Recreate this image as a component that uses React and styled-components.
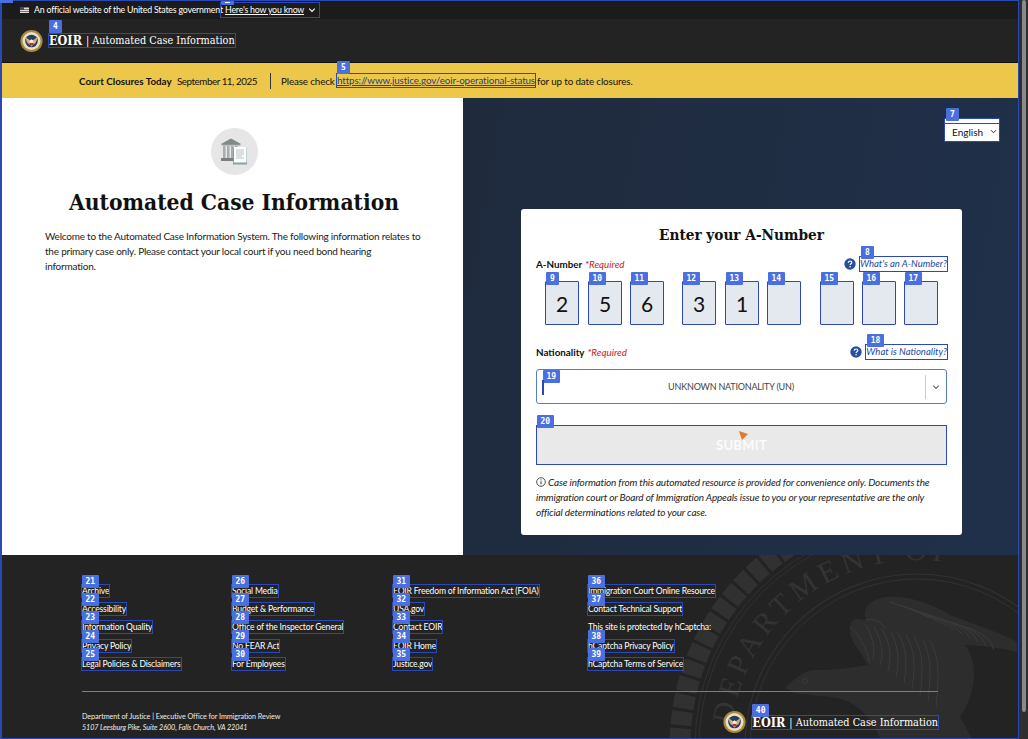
import React from "react";
import styled, { createGlobalStyle } from "styled-components";

const sans = `"Lato", "Noto Sans", sans-serif`;
const serif = `"DejaVu Serif", "Liberation Serif", serif`;

const Global = createGlobalStyle`
  html, body { margin: 0; padding: 0; height: 739px; overflow: hidden; background: #232323; }
  * { box-sizing: border-box; }
  body { font-family: ${sans}; }
`;

const Viewport = styled.div`
  position: relative; display: flex; width: 1028px; height: 739px; overflow: hidden;
`;
const Page = styled.div`
  display: flex; flex-direction: column; width: 1019px; height: 739px; flex: none;
`;
const Track = styled.div`
  width: 9px; background: #2f2f2f; padding: 0 2px 27px 3px; display: flex;
`;
const Thumb = styled.div`
  flex: 1; background: #8a8a8a; border-radius: 2px;
`;
const Frame = styled.div`
  position: absolute; left: 0; top: 0; width: 1019px; height: 739px;
  border: 1px solid #2b48b4; border-left-width: 2px; pointer-events: none;
`;
const Corner = styled.div`
  position: absolute; left: 0; top: 0; width: 13px; height: 3px; background: #4a70e0;
`;

const Banner = styled.div`
  height: 19px; background: #1b1b1b; display: flex; align-items: center;
  padding-left: 20px; color: #fff; font-size: 8.8px; letter-spacing: -0.2px;
`;
const BannerText = styled.span` margin-left: 5px; width: 187px; white-space: nowrap; `;
const HowLink = styled.span`
  position: relative; width: 98px; height: 14px; outline: 1px solid #2b48b4;
  display: flex; align-items: center; justify-content: space-between; padding: 0 3px 0 4px;
  color: #fff; white-space: nowrap;
  span { text-decoration: underline; }
`;

const Header = styled.div`
  height: 44px; background: #232323; display: flex; align-items: center; padding-left: 20px; gap: 6px;
  border-bottom: 1px solid #111;
`;
const Brand = styled.span`
  position: relative; display: inline-flex; align-items: center; color: #fff; white-space: nowrap;
  font-family: ${serif}; font-stretch: condensed; font-size: 10.8px; height: 13px; outline: 1px solid #2b48b4;
  b { font-size: 12.5px; font-weight: 700; margin-right: 4px; }
`;

const Alert = styled.div`
  height: 35px; background: #ecc74a; display: flex; align-items: center; padding-left: 79px;
  font-size: 9.8px; letter-spacing: -0.12px; color: #111; white-space: nowrap;
`;
const AlertBold = styled.b` width: 98px; font-weight: 700; letter-spacing: 0; `;
const AlertDate = styled.span` width: 93px; letter-spacing: -0.45px; `;
const AlertRule = styled.i` width: 1px; height: 16px; background: #333; margin-right: 10px; `;
const AlertCheck = styled.span` width: 56px; `;
const StatusLink = styled.span`
  position: relative; width: 198px; height: 13px; line-height: 13px; outline: 1px solid #2b48b4;
  color: #1f3f7f; text-decoration: underline; margin-right: 2px; white-space: nowrap;
`;

const Main = styled.div` display: flex; height: 457px; `;
const Left = styled.section`
  width: 463px; background: #fff; padding: 30px 40px 0 45px; display: flex; flex-direction: column;
`;
const Emblem = styled.div`
  width: 47px; height: 47px; border-radius: 50%; background: #e6e6e6; align-self: center;
  margin-left: 1px; display: flex; align-items: center; justify-content: center;
`;
const BigTitle = styled.h1`
  font-family: ${serif}; font-stretch: condensed; font-weight: 700; font-size: 22.6px; margin: 12px 0 0; color: #111;
  text-align: center; white-space: nowrap; line-height: 30px;
`;
const Intro = styled.p`
  margin: 12px 0 0; font-size: 10px; letter-spacing: -0.22px; line-height: 15px; color: #1b1b1b;
`;

const Right = styled.section`
  width: 556px; background: linear-gradient(100deg, #1f2b3d, #20304a);
  padding-top: 21px; display: flex; flex-direction: column;
`;
const LangWrap = styled.div`
  position: relative; align-self: flex-end; margin-right: 20px; width: 54px; height: 22px;
  outline: 1px solid #2b48b4; background: #fff; padding-top: 4px;
`;
const Lang = styled.select`
  display: block; width: 100%; height: 18px; border: 0; border-top: 1px solid #2b48b4; background: transparent; font-family: ${sans};
  font-size: 10px; color: #111; padding: 0 0 2px 7px; outline: 0; appearance: none;
`;
const LangArrow = styled.span`
  position: absolute; right: 2px; top: 9px; display: flex; pointer-events: none;
`;
const Card = styled.div`
  width: 441px; height: 326px; margin: 68px 0 0 58px; background: #fff; border-radius: 3px;
  padding: 15px 15px 0; display: flex; flex-direction: column;
`;
const CardTitle = styled.h2`
  font-family: ${serif}; font-stretch: condensed; font-size: 15.2px; line-height: 22px; font-weight: 700; margin: 0; text-align: center; color: #111;
`;
const LabelRow = styled.div`
  display: flex; align-items: center; height: 14px; font-size: 9.8px; margin-top: ${p => p.$top}px;
`;
const FieldLabel = styled.b` font-weight: 700; color: #111; margin-right: 3px; `;
const Required = styled.em` color: #c22; font-style: italic; flex: 1; `;
const Help = styled.span` display: flex; margin-right: 4px; `;
const HelpLink = styled.span`
  position: relative; display: block; height: 14px; line-height: 14px; outline: 1px solid #2b48b4;
  color: #25459f; font-style: italic; white-space: nowrap; font-size: 9.5px;
`;
const Digits = styled.div`
  display: flex; margin-top: 10px; padding-left: 9px;
`;
const Digit = styled.div`
  position: relative; width: 34px; height: 44px; flex: none; background: #e4e8ef;
  border: 1px solid #2b48b4; border-radius: 1px; margin-right: ${p => p.$gap}px;
  display: flex; align-items: center; justify-content: center; font-size: 21px; color: #111;
`;
const SelectBox = styled.div`
  position: relative; height: 35px; margin-top: 10px; border: 1px solid #5b7cc9; border-radius: 3px;
  display: flex; align-items: center; font-size: 9px; letter-spacing: -0.2px; color: #444;
`;
const SelectValue = styled.div` flex: 1; text-align: center; `;
const Cursor = styled.i`
  position: absolute; left: 5px; top: 10px; width: 2px; height: 15px; background: #2b48b4;
`;
const SelectDivider = styled.i` width: 1px; height: 24px; background: #ccc; `;
const Chev = styled.span` width: 20px; display: flex; justify-content: center; `;
const Submit = styled.button`
  position: relative; height: 40px; margin-top: 21px; background: #e9e9e9; border: 1px solid #2b48b4;
  color: #fbfbfb; font-family: ${sans}; font-weight: 700; font-size: 13px; letter-spacing: .3px; padding: 0;
`;
const Arrow = styled.svg` position: absolute; left: 202px; top: 5px; `;
const Note = styled.p`
  margin: 10px 0 0; font-size: 10px; letter-spacing: -0.17px; line-height: 15px; font-style: italic; color: #222;
  svg { vertical-align: -1px; margin-right: 2px; }
`;

const Badge = styled.span`
  position: absolute; left: ${p => p.$x ?? 0}px; top: ${p => p.$y ?? -13}px; height: 13px; min-width: 13px; padding: 0 3.5px;
  background: #4a70e0; color: #fff; border-radius: 1px; font: 700 8px/13px "DejaVu Sans Mono", monospace;
  text-align: center; font-style: normal; letter-spacing: 0; text-decoration: none;
`;

const Footer = styled.footer`
  position: relative; flex: 1; background: #232323; overflow: hidden; padding: 30px 81px 0 82px; color: #fff;
`;
const Seal = styled.svg` position: absolute; left: 0; top: 0; `;
const Columns = styled.div`
  position: relative; display: grid; grid-template-columns: 150px 161px 195px 1fr; height: 90px;
`;
const FootCol = styled.div` display: flex; flex-direction: column; gap: 6.2px; align-items: flex-start; `;
const FootLink = styled.span`
  position: relative; height: 12px; line-height: 12px; font-size: 8.6px; letter-spacing: -0.18px; white-space: nowrap; color: #fff;
  outline: ${p => (p.$plain ? "none" : "1px solid #2b48b4")};
`;
const FootRule = styled.hr`
  position: relative; margin: 16px 0 0; border: 0; height: 1px; background: #7f7f7f;
`;
const FootBottom = styled.div`
  position: relative; display: flex; justify-content: space-between; align-items: center; margin-top: 18px;
`;
const Address = styled.div`
  font-size: 7.2px; letter-spacing: -0.06px; line-height: 11px; color: #eee;
  em { display: block; font-style: italic; }
`;
const FootBrand = styled.div` display: flex; align-items: center; gap: 6px; `;

const MiniSeal = () => (
  <svg width="23" height="24" viewBox="0 0 24 24">
    <circle cx="12" cy="12" r="11.6" fill="#a88a3c" />
    <circle cx="12" cy="12" r="9.4" fill="#e8e0c4" />
    <circle cx="12" cy="12" r="6.6" fill="#2b3a5e" />
    <path d="M6 8.5c2 .6 3.6 1.6 4.5 3l1.5-1.5 1.5 1.5c.9-1.4 2.5-2.4 4.5-3-.3 3.6-1.6 6-3.7 7L12 18l-2.3-2.5C7.6 14.500 6.300 12.100 6 8.500z" fill="#c9b27a" />
    <circle cx="12" cy="13" r="2.200" fill="#f2efe6" />
    <path d="M10 14h4v2.500h-4z" fill="#b33" />
  </svg>
);
const Flag = () => (
  <svg width="9" height="6" viewBox="0 0 9 6">
    <rect width="9" height="6" fill="#e8d8d8" />
    <path d="M0 0h9v1H0zM0 2h9v1H0zM0 4h9v1H0z" fill="#c25a5a" />
    <rect width="4" height="3" fill="#3a4a80" />
  </svg>
);
const Chevron = ({ c = "#fff", s = 8 }) => (
  <svg width={s} height={s} viewBox="0 0 10 10"><path d="M1.500 3.200 5 6.800l3.500-3.600" fill="none" stroke={c} strokeWidth="1.400" /></svg>
);
const Question = () => (
  <svg width="12" height="12" viewBox="0 0 12 12">
    <circle cx="6" cy="6" r="5.700" fill="#2a4fa0" />
    <path d="M4.300 4.700c0-1.100.8-1.700 1.800-1.700s1.700.6 1.700 1.500c0 1.300-1.700 1.300-1.700 2.500" fill="none" stroke="#fff" strokeWidth="1.200" />
    <circle cx="6.100" cy="8.800" r=".8" fill="#fff" />
  </svg>
);
const Court = () => (
  <svg width="30" height="30" viewBox="0 0 30 30">
    <path d="M11 1.500 21 7H1z" fill="#7f8a8a" />
    <rect x="1.500" y="7" width="19" height="1.500" fill="#8f9898" />
    <path d="M3 9h2.500v12H3zM7 9h2.500v12H7zM11 9h2.500v12H11zM15 9h2.500v12H15z" fill="#a6adad" />
    <rect x="1" y="21" width="20" height="3" fill="#7a8080" />
    <rect x="13" y="10.500" width="14" height="17" fill="#7fa5a8" />
    <rect x="14" y="10" width="12.500" height="15.500" fill="#fff" />
    <path d="M16 13h8M16 15h8M16 17h8M16 19h6M16 21h8" stroke="#a8b0b0" strokeWidth=".8" />
  </svg>
);
const Info = () => (
  <svg width="10" height="10" viewBox="0 0 10 10">
    <circle cx="5" cy="5" r="4.300" fill="none" stroke="#222" strokeWidth=".8" />
    <path d="M5 4.300v3M5 2.400v1" stroke="#222" strokeWidth=".9" />
  </svg>
);

const feathers = Array.from({ length: 9 }, (_, i) => i);
const BigSeal = () => (
  <Seal width="1019" height="184" viewBox="0 555 1019 184">
    <defs>
      <path id="sealText" d="M 917 932 A 186 186 0 1 1 917 560 A 186 186 0 1 1 917 932" />
    </defs>
    <g fill="none" stroke="#313131">
      <circle cx="917" cy="746" r="237" strokeWidth="21" strokeDasharray="14 3" />
      <circle cx="917" cy="746" r="222" strokeWidth="1" />
      <circle cx="917" cy="746" r="218" strokeWidth="1" />
      <circle cx="917" cy="746" r="172" strokeWidth="1.200" />
      <circle cx="917" cy="746" r="167" strokeWidth="1" />
    </g>
    <text fontFamily="Liberation Serif, serif" fontSize="30" fill="#333333" letterSpacing="5">
      <textPath href="#sealText" startOffset="26.800%">DEPARTMENT OF</textPath>
    </text>
    <path fill="#2d2d2d" d="M785 688C795 678 805 670 815 670C835 670 850 668 868 665C860 650 848 640 850 627C852 615 860 620 866 620C862 610 868 600 885 597C910 595 935 605 950 615C975 625 1000 632 1017 642L1017 652C1000 648 985 646 965 645C980 665 975 695 960 717L972 739L880 739C875 722 862 708 845 700C825 695 805 695 795 693Z" />
    <g fill="none" stroke="#3b3b3b" strokeWidth="1">
      {feathers.map(i => (
        <path key={i} d={`M${866 + i * 8} ${625 + i * 2}c8 14 10 28 6 ${34 + i * 4}`} />
      ))}
      {feathers.map(i => (
        <path key={`w${i}`} d={`M${890 + i * 9} ${602 + i * 3}c14 4 28 10 ${40 - i} ${16 + i}`} />
      ))}
      <path d="M850 627c8 6 16 20 20 36M866 620c8-2 14 2 20 8" />
      <circle cx="805" cy="681" r="2.500" />
    </g>
  </Seal>
);

const rows = [
  [[21, "Archive"], [22, "Accessibility"], [23, "Information Quality"], [24, "Privacy Policy"], [25, "Legal Policies & Disclaimers"]],
  [[26, "Social Media"], [27, "Budget & Performance"], [28, "Office of the Inspector General"], [29, "No FEAR Act"], [30, "For Employees"]],
  [[31, "EOIR Freedom of Information Act (FOIA)"], [32, "USA.gov"], [33, "Contact EOIR"], [34, "EOIR Home"], [35, "Justice.gov"]],
  [[36, "Immigration Court Online Resource"], [37, "Contact Technical Support"], [null, "This site is protected by hCaptcha:"], [38, "hCaptcha Privacy Policy"], [39, "hCaptcha Terms of Service"]],
];
const digits = [[2, 9], [5, 8], [6, 18], [3, 9], [1, 8], ["", 19], ["", 8], ["", 8], ["", 0]];

export default function App() {
  return (
    <Viewport>
      <Global />
      <Page>
        <Banner>
          <Flag />
          <BannerText>An official website of the United States government</BannerText>
          <HowLink>
            <Badge $x={0} $y={-11}>3</Badge>
            <span>Here's how you know</span>
            <Chevron />
          </HowLink>
        </Banner>
        <Header>
          <MiniSeal />
          <Brand>
            <Badge $x={0} $y={-14}>4</Badge>
            <b>EOIR</b>| Automated Case Information
          </Brand>
        </Header>
        <Alert>
          <AlertBold>Court Closures Today</AlertBold>
          <AlertDate>September 11, 2025</AlertDate>
          <AlertRule />
          <AlertCheck>Please check</AlertCheck>
          <StatusLink>
            <Badge $x={0} $y={-13}>5</Badge>
            https://www.justice.gov/eoir-operational-status
          </StatusLink>
          <span>for up to date closures.</span>
        </Alert>
        <Main>
          <Left>
            <Emblem><Court /></Emblem>
            <BigTitle>Automated Case Information</BigTitle>
            <Intro>
              Welcome to the Automated Case Information System. The following information relates to the primary case only. Please contact your local court if you need bond hearing information.
            </Intro>
          </Left>
          <Right>
            <LangWrap>
              <Badge $x={1} $y={-11}>7</Badge>
              <Lang defaultValue="English"><option>English</option></Lang>
              <LangArrow><Chevron c="#222" s={7} /></LangArrow>
            </LangWrap>
            <Card>
              <CardTitle>Enter your A-Number</CardTitle>
              <LabelRow $top={11}>
                <FieldLabel>A-Number</FieldLabel>
                <Required>*Required</Required>
                <Help><Question /></Help>
                <HelpLink>
                  <Badge $x={1} $y={-11}>8</Badge>
                  What's an A-Number?
                </HelpLink>
              </LabelRow>
              <Digits>
                {digits.map(([d, gap], i) => (
                  <Digit key={i} $gap={gap}>
                    <Badge $x={0} $y={-10}>{i + 9}</Badge>
                    {d}
                  </Digit>
                ))}
              </Digits>
              <LabelRow $top={20}>
                <FieldLabel>Nationality</FieldLabel>
                <Required>*Required</Required>
                <Help><Question /></Help>
                <HelpLink>
                  <Badge $x={1} $y={-11}>18</Badge>
                  What is Nationality?
                </HelpLink>
              </LabelRow>
              <SelectBox>
                <Badge $x={6} $y={0}>19</Badge>
                <Cursor />
                <SelectValue>UNKNOWN NATIONALITY (UN)</SelectValue>
                <SelectDivider />
                <Chev><Chevron c="#666" /></Chev>
              </SelectBox>
              <Submit>
                <Badge $x={0} $y={-11}>20</Badge>
                <Arrow width="10" height="10" viewBox="0 0 10 10"><path d="M0 0 9 3 3 9z" fill="#e07a2c" /></Arrow>
                SUBMIT
              </Submit>
              <Note>
                <Info />
                Case information from this automated resource is provided for convenience only. Documents the immigration court or Board of Immigration Appeals issue to you or your representative are the only official determinations related to your case.
              </Note>
            </Card>
          </Right>
        </Main>
        <Footer>
          <BigSeal />
          <Columns>
            {rows.map((col, c) => (
              <FootCol key={c}>
                {col.map(([n, t]) => (
                  <FootLink key={t} $plain={n === null}>
                    {n !== null && <Badge $x={0} $y={-10}>{n}</Badge>}
                    {t}
                  </FootLink>
                ))}
              </FootCol>
            ))}
          </Columns>
          <FootRule />
          <FootBottom>
            <Address>
              Department of Justice | Executive Office for Immigration Review
              <em>5107 Leesburg Pike, Suite 2600, Falls Church, VA 22041</em>
            </Address>
            <FootBrand>
              <MiniSeal />
              <Brand>
                <Badge $x={0} $y={-12}>40</Badge>
                <b>EOIR</b>| Automated Case Information
              </Brand>
            </FootBrand>
          </FootBottom>
        </Footer>
      </Page>
      <Track><Thumb /></Track>
      <Frame />
      <Corner />
    </Viewport>
  );
}
